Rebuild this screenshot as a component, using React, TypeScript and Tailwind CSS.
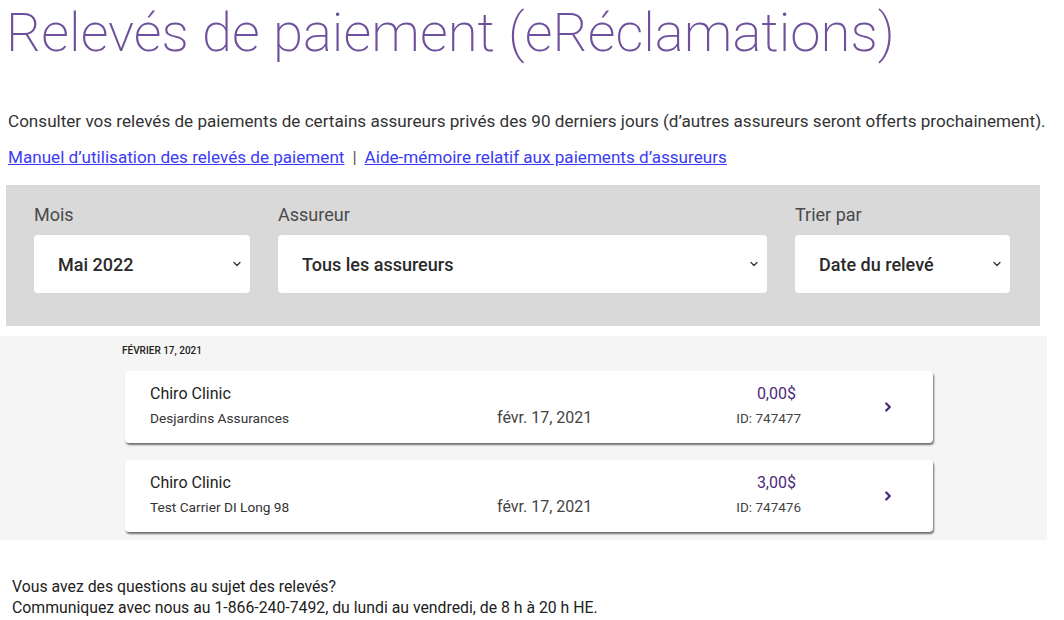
import { ChevronDown, ChevronRight } from "lucide-react";

const font = { fontFamily: "Roboto, 'Liberation Sans', sans-serif" };

type Stmt = { clinic: string; carrier: string; date: string; amount: string; id: string };

const statements: Stmt[] = [
  { clinic: "Chiro Clinic", carrier: "Desjardins Assurances", date: "févr. 17, 2021", amount: "0,00$", id: "747477" },
  { clinic: "Chiro Clinic", carrier: "Test Carrier DI Long 98", date: "févr. 17, 2021", amount: "3,00$", id: "747476" },
];

function Select({ label, value, width }: { label: string; value: string; width: string }) {
  return (
    <div className={`flex flex-col ${width}`}>
      <span className="text-[18px] leading-[24px] text-[#4a4a4a] mb-[8px]">{label}</span>
      <div className="h-[58px] bg-white rounded-[4px] flex items-center justify-between pl-[24px] pr-[7px]">
        <span className="text-[18px] font-medium text-[#2a2a2a]">{value}</span>
        <ChevronDown size={12} strokeWidth={2.5} className="text-[#333]" />
      </div>
    </div>
  );
}

function StatementCard({ s }: { s: Stmt }) {
  return (
    <div className="w-[808px] h-[72px] bg-white rounded-[4px] shadow-[1px_2px_2px_rgba(0,0,0,0.55)] flex items-center pl-[25px]">
      <div className="w-[347px] flex flex-col -mt-[2px]">
        <span className="text-[16px] leading-[24px] text-[#222]">{s.clinic}</span>
        <span className="text-[13.7px] leading-[24px] text-[#333]">{s.carrier}</span>
      </div>
      <div className="w-[150px] pt-[22px]">
        <span className="text-[16px] leading-[24px] text-[#444]">{s.date}</span>
      </div>
      <div className="w-[154px] flex flex-col items-end -mt-[2px]">
        <span className="text-[16px] leading-[24px] text-[#4b2a7b] pr-[5px]">{s.amount}</span>
        <span className="text-[13.5px] leading-[24px] text-[#444]">ID: {s.id}</span>
      </div>
      <div className="flex-1 flex justify-end pr-[38px]">
        <ChevronRight size={14} strokeWidth={4} className="text-[#4b2a7b]" />
      </div>
    </div>
  );
}

export default function App() {
  return (
    <div className="w-[1064px] h-[620px] bg-white overflow-hidden" style={font}>
      <h1 className="pl-[6px] text-[54.5px] leading-[64px] font-extralight text-[#6e509c] whitespace-nowrap">
        Relevés de paiement (eRéclamations)
      </h1>
      <p className="mt-[45px] pl-[8px] text-[17.1px] leading-[24px] text-[#333] whitespace-nowrap">
        Consulter vos relevés de paiements de certains assureurs privés des 90 derniers jours (d’autres assureurs seront offerts prochainement).
      </p>
      <div className="mt-[12px] pl-[8px] text-[17.1px] leading-[24px] whitespace-nowrap">
        <a className="text-[#3b3bf5] underline">Manuel d’utilisation des relevés de paiement</a>
        <span className="text-[#555] mx-[8px]">|</span>
        <a className="text-[#3b3bf5] underline">Aide-mémoire relatif aux paiements d’assureurs</a>
      </div>
      <div className="mt-[16px] ml-[6px] w-[1034px] h-[141px] bg-[#d9d9d9] flex gap-[28px] pl-[28px] pt-[18px]">
        <Select label="Mois" value="Mai 2022" width="w-[216px]" />
        <Select label="Assureur" value="Tous les assureurs" width="w-[489px]" />
        <Select label="Trier par" value="Date du relevé" width="w-[215px]" />
      </div>
      <div className="mt-[10px] w-[1047px] h-[204px] bg-[#f5f5f5] pl-[125px] pt-[9px]">
        <div className="text-[10px] leading-[12px] font-medium text-[#222] uppercase -ml-[3px] mb-[14px]">
          Février 17, 2021
        </div>
        <div className="flex flex-col gap-[17px]">
          {statements.map((s) => (
            <StatementCard key={s.id} s={s} />
          ))}
        </div>
      </div>
      <div className="mt-[36px] pl-[12px] text-[15.8px] leading-[21px] text-[#222]">
        <p>Vous avez des questions au sujet des relevés?</p>
        <p>Communiquez avec nous au 1-866-240-7492, du lundi au vendredi, de 8 h à 20 h HE.</p>
      </div>
    </div>
  );
}
